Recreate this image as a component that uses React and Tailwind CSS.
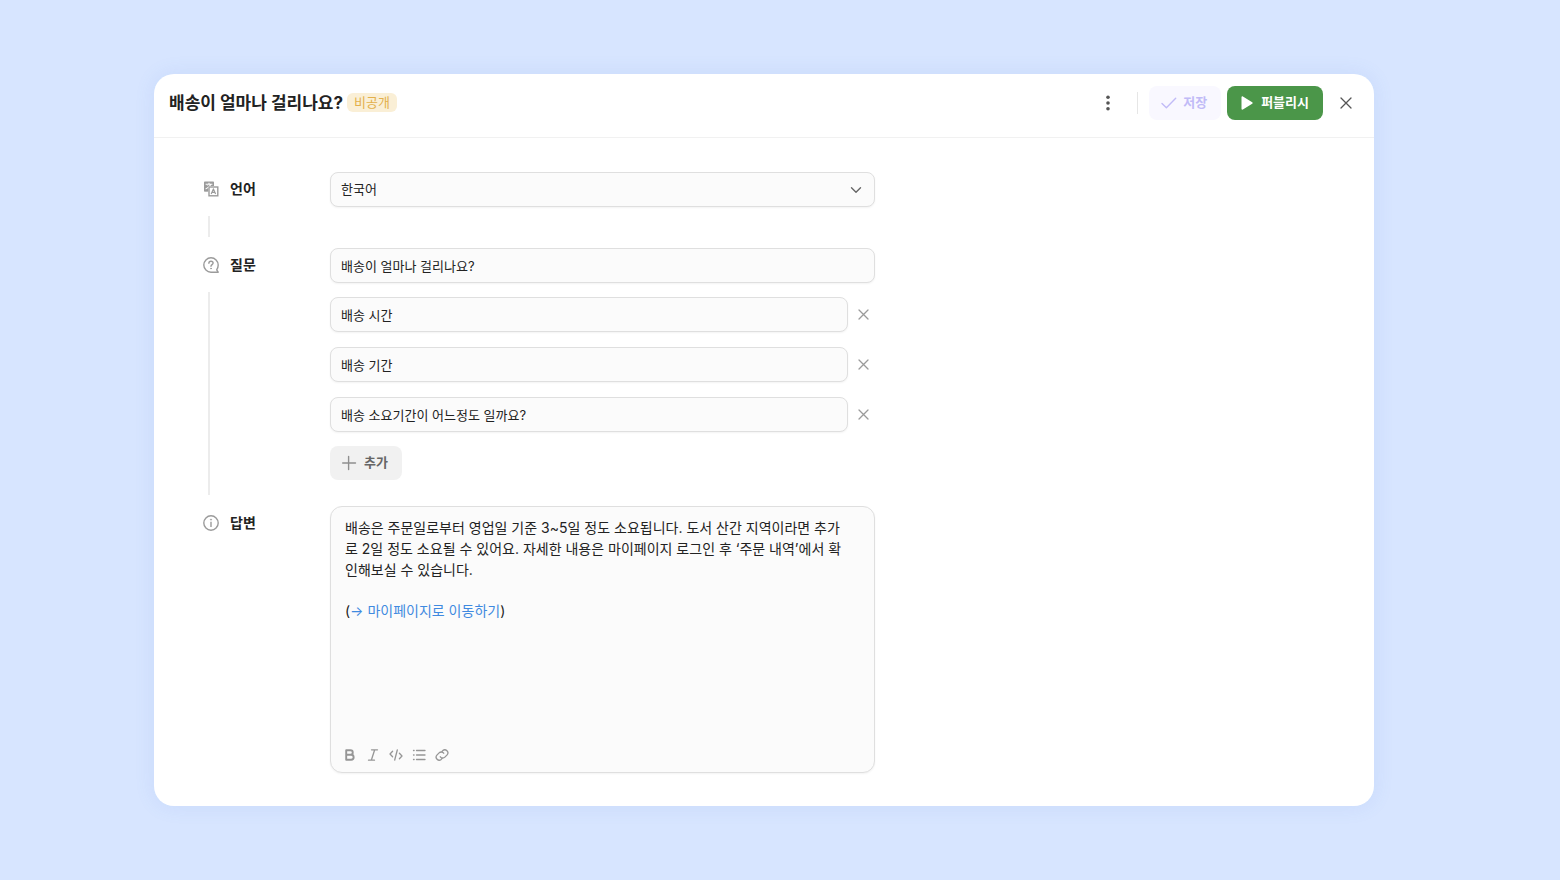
const fontStack = "font-[Inter,'Noto_Sans_CJK_KR',sans-serif]"

const TranslateIcon = () => (
    <svg width="16" height="16" viewBox="0 0 16 16" fill="none">
        <path fill="#9b9b9b" d="M1.800 0.600h8.400a.8.800 0 0 1 .8.800V10.400H1.800a.8.800 0 0 1-.8-.8V1.400a.8.800 0 0 1 .8-.8z" />
        <path stroke="#fff" strokeWidth="1.100" d="M2.600 3.300h6.800M6 1.800v1.500M7.800 3.300C7 5.600 5.300 7.300 2.800 8.400M4.200 4.300c.5 1.300 1.200 2.200 2.400 3" />
        <rect x="4.900" y="5" width="10.600" height="10.500" fill="#fff" />
        <rect x="6" y="6" width="8.800" height="8.800" stroke="#9b9b9b" strokeWidth="1.400" />
        <path fill="#9b9b9b" d="M1 4.500h4.200v5.900H1z" />
        <path stroke="#fff" strokeWidth="1.100" d="M2.600 7.900c1-.4 1.900-.9 2.600-1.500" />
        <path stroke="#9b9b9b" strokeWidth="1.200" strokeLinejoin="round" d="M8.200 13l2.200-5.100 2.200 5.100M9 11.400h2.800" />
    </svg>
)

const QuestionIcon = () => (
    <svg width="16" height="16" viewBox="0 0 16 16" fill="none" stroke="#9b9b9b" strokeWidth="1.4" strokeLinecap="round" strokeLinejoin="round">
        <path d="M15.200 15.200H8A7.200 7.200 0 1 1 15.200 8c0 2-.6 3.500-1.500 4.800z" />
        <path d="M5.900 6.200C5.900 5 6.700 4.200 8 4.200s2.100.8 2.100 1.900c0 1.500-2.100 1.600-2.100 3.200" />
        <circle cx="8" cy="11.500" r=".5" fill="#9b9b9b" strokeWidth=".7" />
    </svg>
)

const InfoIcon = () => (
    <svg width="16" height="16" viewBox="0 0 16 16" fill="none" stroke="#9b9b9b" strokeWidth="1.4">
        <circle cx="8" cy="8" r="7.200" />
        <path d="M8 6.700v5.300" />
        <circle cx="8" cy="4.600" r=".6" fill="#9b9b9b" strokeWidth=".7" />
    </svg>
)

const CrossIcon = ({ size }) => (
    <svg width={size} height={size} viewBox={`0 0 ${size} ${size}`} fill="none" stroke="currentColor" strokeWidth="1.3" strokeLinecap="round">
        <path d={`M1 1L${size - 1} ${size - 1}M${size - 1} 1L1 ${size - 1}`} />
    </svg>
)

const Section = ({ icon, label, htmlFor, labelId, last, children }) => {
    return (
        <div className="flex">
            <div className="flex flex-col shrink-0 w-[127px]">
                <div className="flex items-center h-[34px] gap-[11px]">
                    {icon}
                    <label id={labelId} htmlFor={htmlFor} className="text-sm leading-5 font-bold text-[#222222]">{label}</label>
                </div>
                {!last && <div className="flex-1 w-0.5 ml-[5px] mt-2.5 mb-[11px] bg-[#ececec]"></div>}
            </div>
            <div className="flex-1 max-w-[545px]">{children}</div>
        </div>
    )
}

const fieldClass = 'block w-full h-[35px] px-2.5 rounded-lg border border-[#dfdfdf] bg-[#fbfbfb] shadow-[0_1px_2px_rgba(0,0,0,0.05)] text-[13px] text-[#222222] outline-none'

const similarQuestions = ['배송 시간', '배송 기간', '배송 소요기간이 어느정도 일까요?']

const tools = [
    {
        name: '굵게',
        icon: <path strokeWidth="1.900" d="M3.200 2.300h4.300a2.250 2.250 0 0 1 0 4.500H3.200zM3.200 6.800h5a2.450 2.450 0 0 1 0 4.900h-5z" />,
    },
    {
        name: '기울임',
        icon: <path d="M5.500 1.800h6M2.500 12.200h6M8.700 1.800L5.300 12.200" />,
    },
    {
        name: '코드',
        icon: <path d="M3.600 3.300L1 6l2.600 2.700M10.400 5.300L13 8l-2.600 2.700M8.300 2L5.700 12" />,
    },
    {
        name: '목록',
        icon: <path d="M4.500 2.500H13M4.500 7H13M4.500 11.500H13M1.500 2.500h.6M1.500 7h.6M1.500 11.500h.6" />,
    },
    {
        name: '링크',
        icon: <path d="M6.300 4.100l1.500-1.500a3.050 3.050 0 0 1 4.300 4.300L9.900 9.100a3.050 3.050 0 0 1-4.600-.3M7.700 9.900l-1.500 1.500a3.050 3.050 0 0 1-4.300-4.300l2.200-2.200a3.050 3.050 0 0 1 4.600.3" />,
    },
]

const Header = () => {
    return (
        <header className="flex items-start justify-between pl-[15px] pr-[11px] pt-3 pb-[17px] border-b border-[#f1f1f1]">
            <div className="flex items-center h-[33px] gap-1">
                <h1 className="text-[17px] leading-6 font-bold text-[#222222]">배송이 얼마나 걸리나요?</h1>
                <span className="px-[7px] rounded-md bg-[#faefd6] text-[13px] leading-[19px] text-[#e3b04b]">비공개</span>
            </div>
            <div className="flex items-center">
                <button aria-label="더보기" className="flex items-center justify-center size-[34px] text-[#555555]">
                    <svg width="4" height="16" viewBox="0 0 4 16" fill="currentColor">
                        <circle cx="2" cy="2.200" r="1.800" />
                        <circle cx="2" cy="8" r="1.800" />
                        <circle cx="2" cy="13.800" r="1.800" />
                    </svg>
                </button>
                <div className="w-px h-[22px] ml-3 mr-[11px] bg-[#e6e6e6]"></div>
                <button className="flex items-center h-[34px] gap-1.5 pl-3 pr-3.5 rounded-lg bg-[#f9f8ff] text-[13px] font-bold text-[#c1bbf7]">
                    <svg width="16" height="16" viewBox="0 0 16 16" fill="none" stroke="currentColor" strokeWidth="1.4" strokeLinecap="round" strokeLinejoin="round">
                        <path d="M1 8.400l4.400 4.300L14.700 3.300" />
                    </svg>
                    저장
                </button>
                <button className="flex items-center h-[34px] gap-1.5 ml-1.5 pl-3 pr-3.5 rounded-lg bg-[#4b9649] text-[13px] font-bold text-white">
                    <svg width="16" height="16" viewBox="0 0 16 16" fill="currentColor">
                        <path d="M2.500 2.200c0-.8.700-1.200 1.400-.8l9.300 5.800c.6.400.6 1.200 0 1.600l-9.300 5.800c-.7.400-1.400 0-1.400-.8z" />
                    </svg>
                    퍼블리시
                </button>
                <button aria-label="닫기" className="flex items-center justify-center size-[34px] ml-1.5 text-[#555555]">
                    <CrossIcon size={12} />
                </button>
            </div>
        </header>
    )
}

const App = () => {
    return (
        <div className={`min-h-screen bg-[#d7e5ff] pl-[154px] pr-[186px] py-[74px] ${fontStack}`}>
            <div className="bg-white rounded-[20px] shadow-[0_0_20px_rgba(90,130,220,0.12)]">
                <Header />
                <main className="pl-[49px] pr-12 pt-[34px] pb-[33px]">
                    <Section icon={<TranslateIcon />} label="언어" htmlFor="language">
                        <div className="relative mb-[41px]">
                            <select id="language" className={`${fieldClass} appearance-none`}>
                                <option>한국어</option>
                            </select>
                            <svg className="absolute right-[13px] top-3 pointer-events-none" width="12" height="12" viewBox="0 0 12 12" fill="none" stroke="#666666" strokeWidth="1.4" strokeLinecap="round" strokeLinejoin="round">
                                <path d="M1.500 3.700L6 8.200l4.500-4.500" />
                            </svg>
                        </div>
                    </Section>

                    <Section icon={<QuestionIcon />} label="질문" htmlFor="question">
                        <div className="flex flex-col gap-3.5 pb-[26px]">
                            <input id="question" className={fieldClass} defaultValue="배송이 얼마나 걸리나요?" />
                            <div className="flex flex-col gap-[15px]">
                                {similarQuestions.map((q) => (
                                    <div key={q} className="flex items-center">
                                        <input aria-label="유사 질문" className={fieldClass} defaultValue={q} />
                                        <button aria-label="삭제" className="flex items-center justify-center shrink-0 w-[27px] h-[34px] pl-1 text-[#9b9b9b]">
                                            <CrossIcon size={11} />
                                        </button>
                                    </div>
                                ))}
                            </div>
                            <button className="flex items-center self-start h-[34px] gap-1.5 pl-3 pr-3.5 rounded-lg bg-[#f1f1f1] text-[13px] font-bold text-[#666666]">
                                <svg width="16" height="16" viewBox="0 0 16 16" fill="none" stroke="#8f8f8f" strokeWidth="1.4" strokeLinecap="round">
                                    <path d="M6.600 1.500v13M.7 8h12.800" />
                                </svg>
                                추가
                            </button>
                        </div>
                    </Section>

                    <Section icon={<InfoIcon />} label="답변" labelId="answer" last>
                        <div className="flex flex-col rounded-xl border border-[#dfdfdf] bg-[#fbfbfb] shadow-[0_1px_2px_rgba(0,0,0,0.05)]">
                            <div
                                role="textbox"
                                aria-multiline="true"
                                aria-labelledby="answer"
                                contentEditable
                                suppressContentEditableWarning
                                className="min-h-[231px] pl-3.5 pr-[26px] pt-2.5 text-sm leading-[21px] text-[#222222] outline-none"
                            >
                                <p>배송은 주문일로부터 영업일 기준 3~5일 정도 소요됩니다. 도서 산간 지역이라면 추가로 2일 정도 소요될 수 있어요. 자세한 내용은 마이페이지 로그인 후 ‘주문 내역’에서 확인해보실 수 있습니다.</p>
                                <p className="mt-5">
                                    (<a href="#mypage" className="text-[#3f8ae0]">→ 마이페이지로 이동하기</a>)
                                </p>
                            </div>
                            <div className="flex gap-[9px] px-3 pb-2.5 pt-2.5">
                                {tools.map((tool) => (
                                    <button key={tool.name} aria-label={tool.name}>
                                        <svg width="14" height="14" viewBox="0 0 14 14" fill="none" stroke="#969696" strokeWidth="1.3" strokeLinecap="round" strokeLinejoin="round">
                                            {tool.icon}
                                        </svg>
                                    </button>
                                ))}
                            </div>
                        </div>
                    </Section>
                </main>
            </div>
        </div>
    )
}

export default App
